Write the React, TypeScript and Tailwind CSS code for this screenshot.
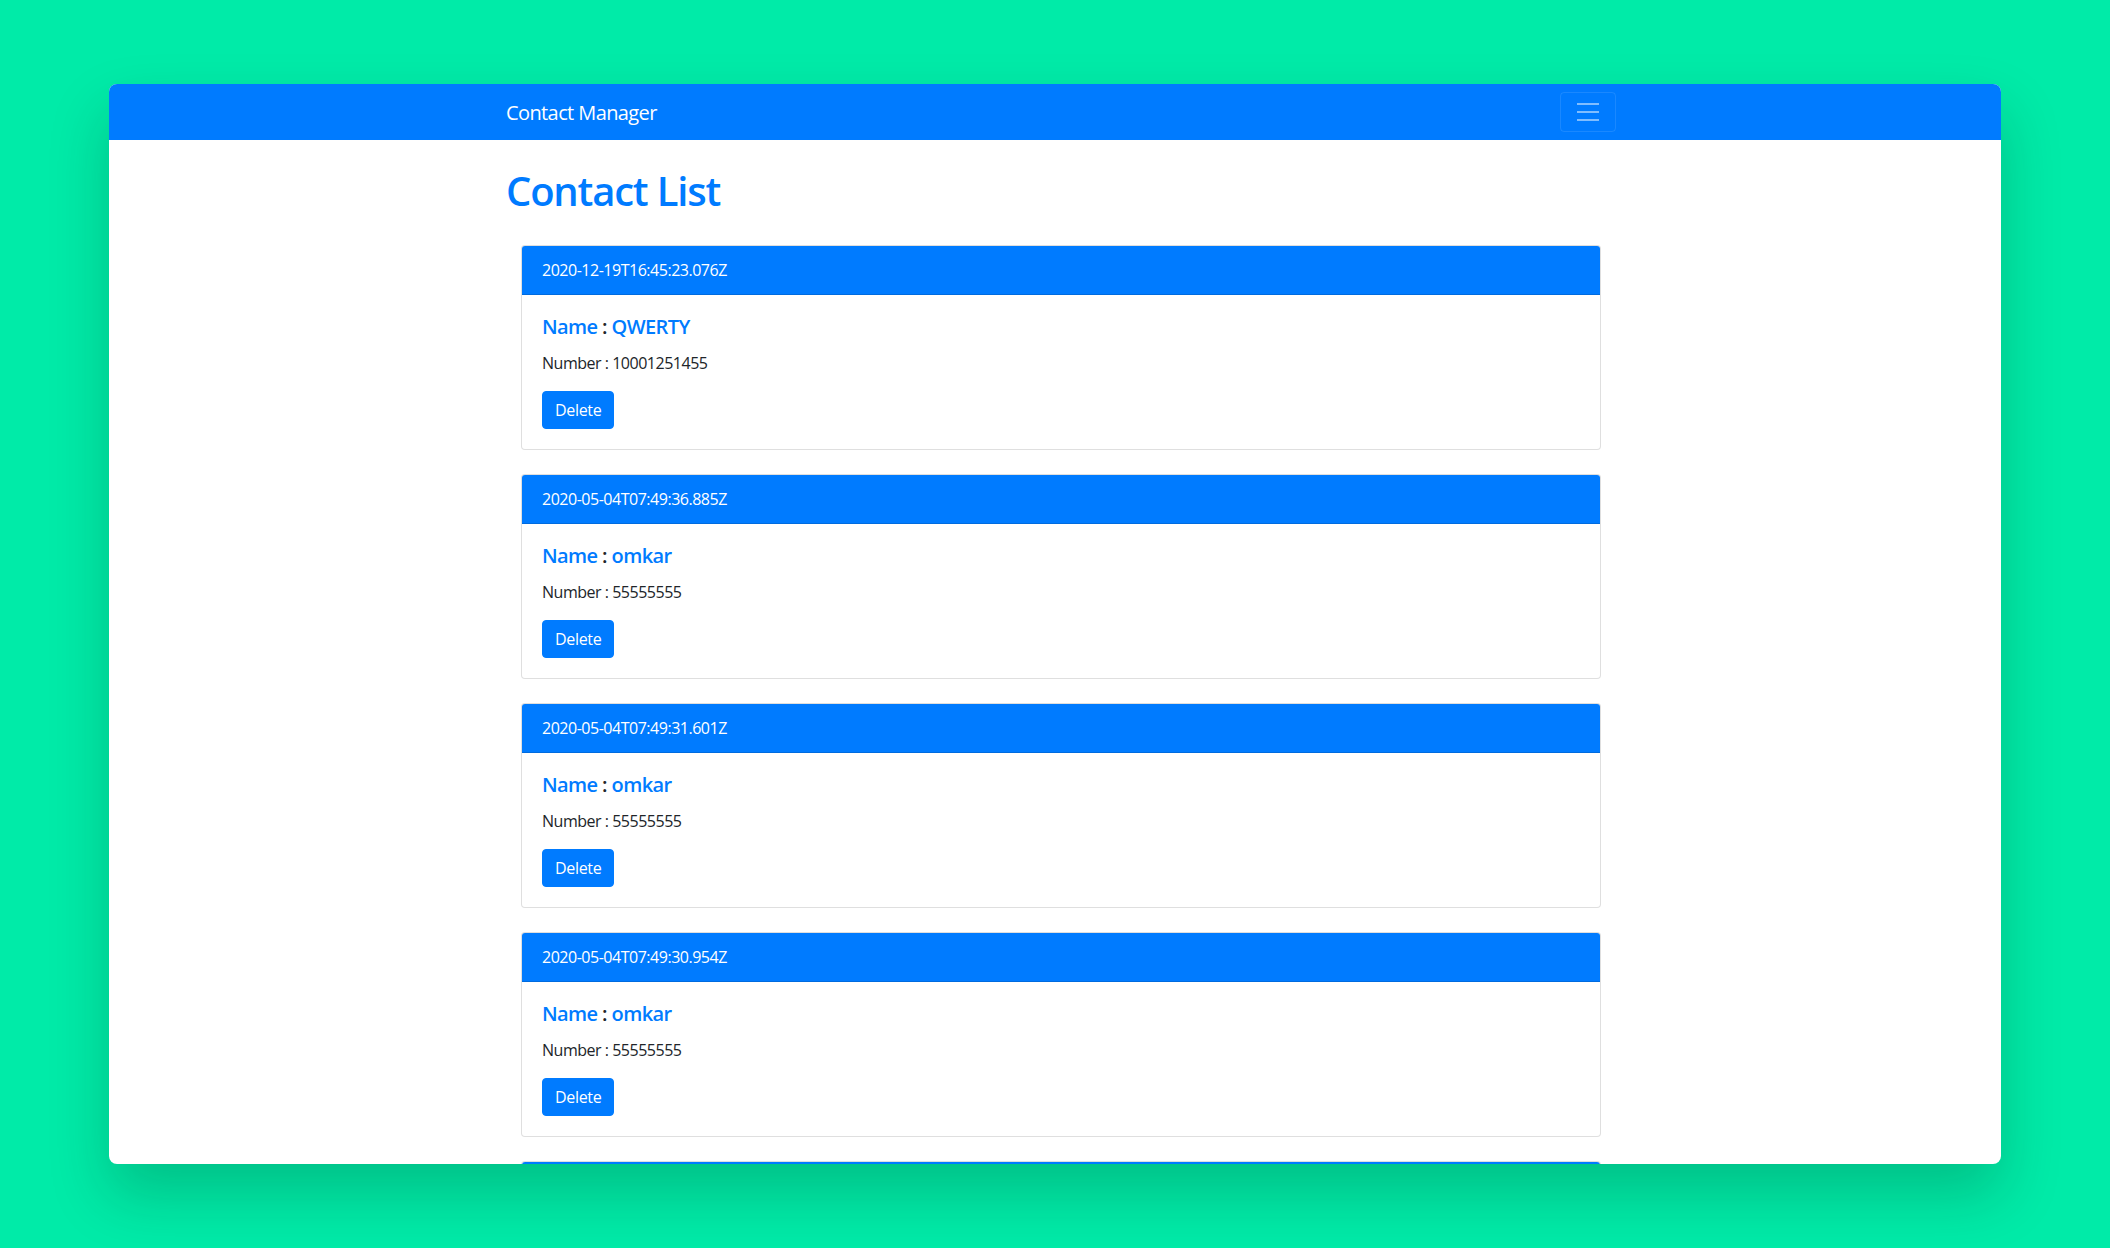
const contacts = [
  { id: "2020-12-19T16:45:23.076Z", name: "QWERTY", number: "10001251455" },
  { id: "2020-05-04T07:49:36.885Z", name: "omkar", number: "55555555" },
  { id: "2020-05-04T07:49:31.601Z", name: "omkar", number: "55555555" },
  { id: "2020-05-04T07:49:30.954Z", name: "omkar", number: "55555555" },
  { id: "2020-05-04T07:49:29.120Z", name: "omkar", number: "55555555" },
];

const MenuIcon = () => (
  <svg width="30" height="30" viewBox="0 0 30 30" fill="none">
    <path d="M4 7h22M4 15h22M4 23h22" stroke="rgba(255,255,255,0.5)" strokeWidth="2" strokeMiterlimit="10" />
  </svg>
);

const ContactCard = ({ id, name, number }: { id: string; name: string; number: string }) => (
  <div className="mx-[15px] mb-6 rounded-[4px] border border-black/[0.125] bg-white">
    <div className="rounded-t-[3px] border-b border-black/[0.125] bg-[#007bff] px-5 py-3 text-base leading-6 tracking-[-0.03em] text-white">
      {id}
    </div>
    <div className="p-5">
      <h5 className="mb-3 text-[20px] font-semibold leading-6 tracking-[-0.03em] text-[#007bff]">
        Name <span className="text-[#212529]">:</span> {name}
      </h5>
      <p className="mb-4 text-base leading-6 tracking-[-0.03em] text-[#212529]">Number : {number}</p>
      <button className="rounded-[4px] border border-[#007bff] bg-[#007bff] px-3 py-1.5 text-base leading-6 tracking-[-0.02em] text-white">
        Delete
      </button>
    </div>
  </div>
);

export default function App() {
  return (
    <div
      className="h-[1248px] w-[2110px] overflow-hidden bg-[#00eba8] pl-[109px] pt-[84px]"
      style={{ fontFamily: '"Open Sans", "Noto Sans", sans-serif' }}
    >
      <div className="h-[1080px] w-[1892px] overflow-hidden rounded-lg bg-white shadow-[0_30px_60px_rgba(0,40,20,0.22)]">
        <nav className="flex h-14 items-center bg-[#007bff] pl-[397px]">
          <div className="flex w-[1110px] items-center justify-between">
            <span className="pt-0.5 text-[20px] leading-[30px] tracking-[-0.03em] text-white">Contact Manager</span>
            <button className="flex h-10 items-center rounded-[4px] border border-white/10 px-3">
              <MenuIcon />
            </button>
          </div>
        </nav>
        <main className="w-[1110px] pt-[27px]" style={{ marginLeft: 397 }}>
          <h1 className="mb-[30px] text-[40px] font-semibold leading-[48px] tracking-[-0.03em] text-[#007bff]">
            Contact List
          </h1>
          {contacts.map((c) => (
            <ContactCard key={c.id} {...c} />
          ))}
        </main>
      </div>
    </div>
  );
}
